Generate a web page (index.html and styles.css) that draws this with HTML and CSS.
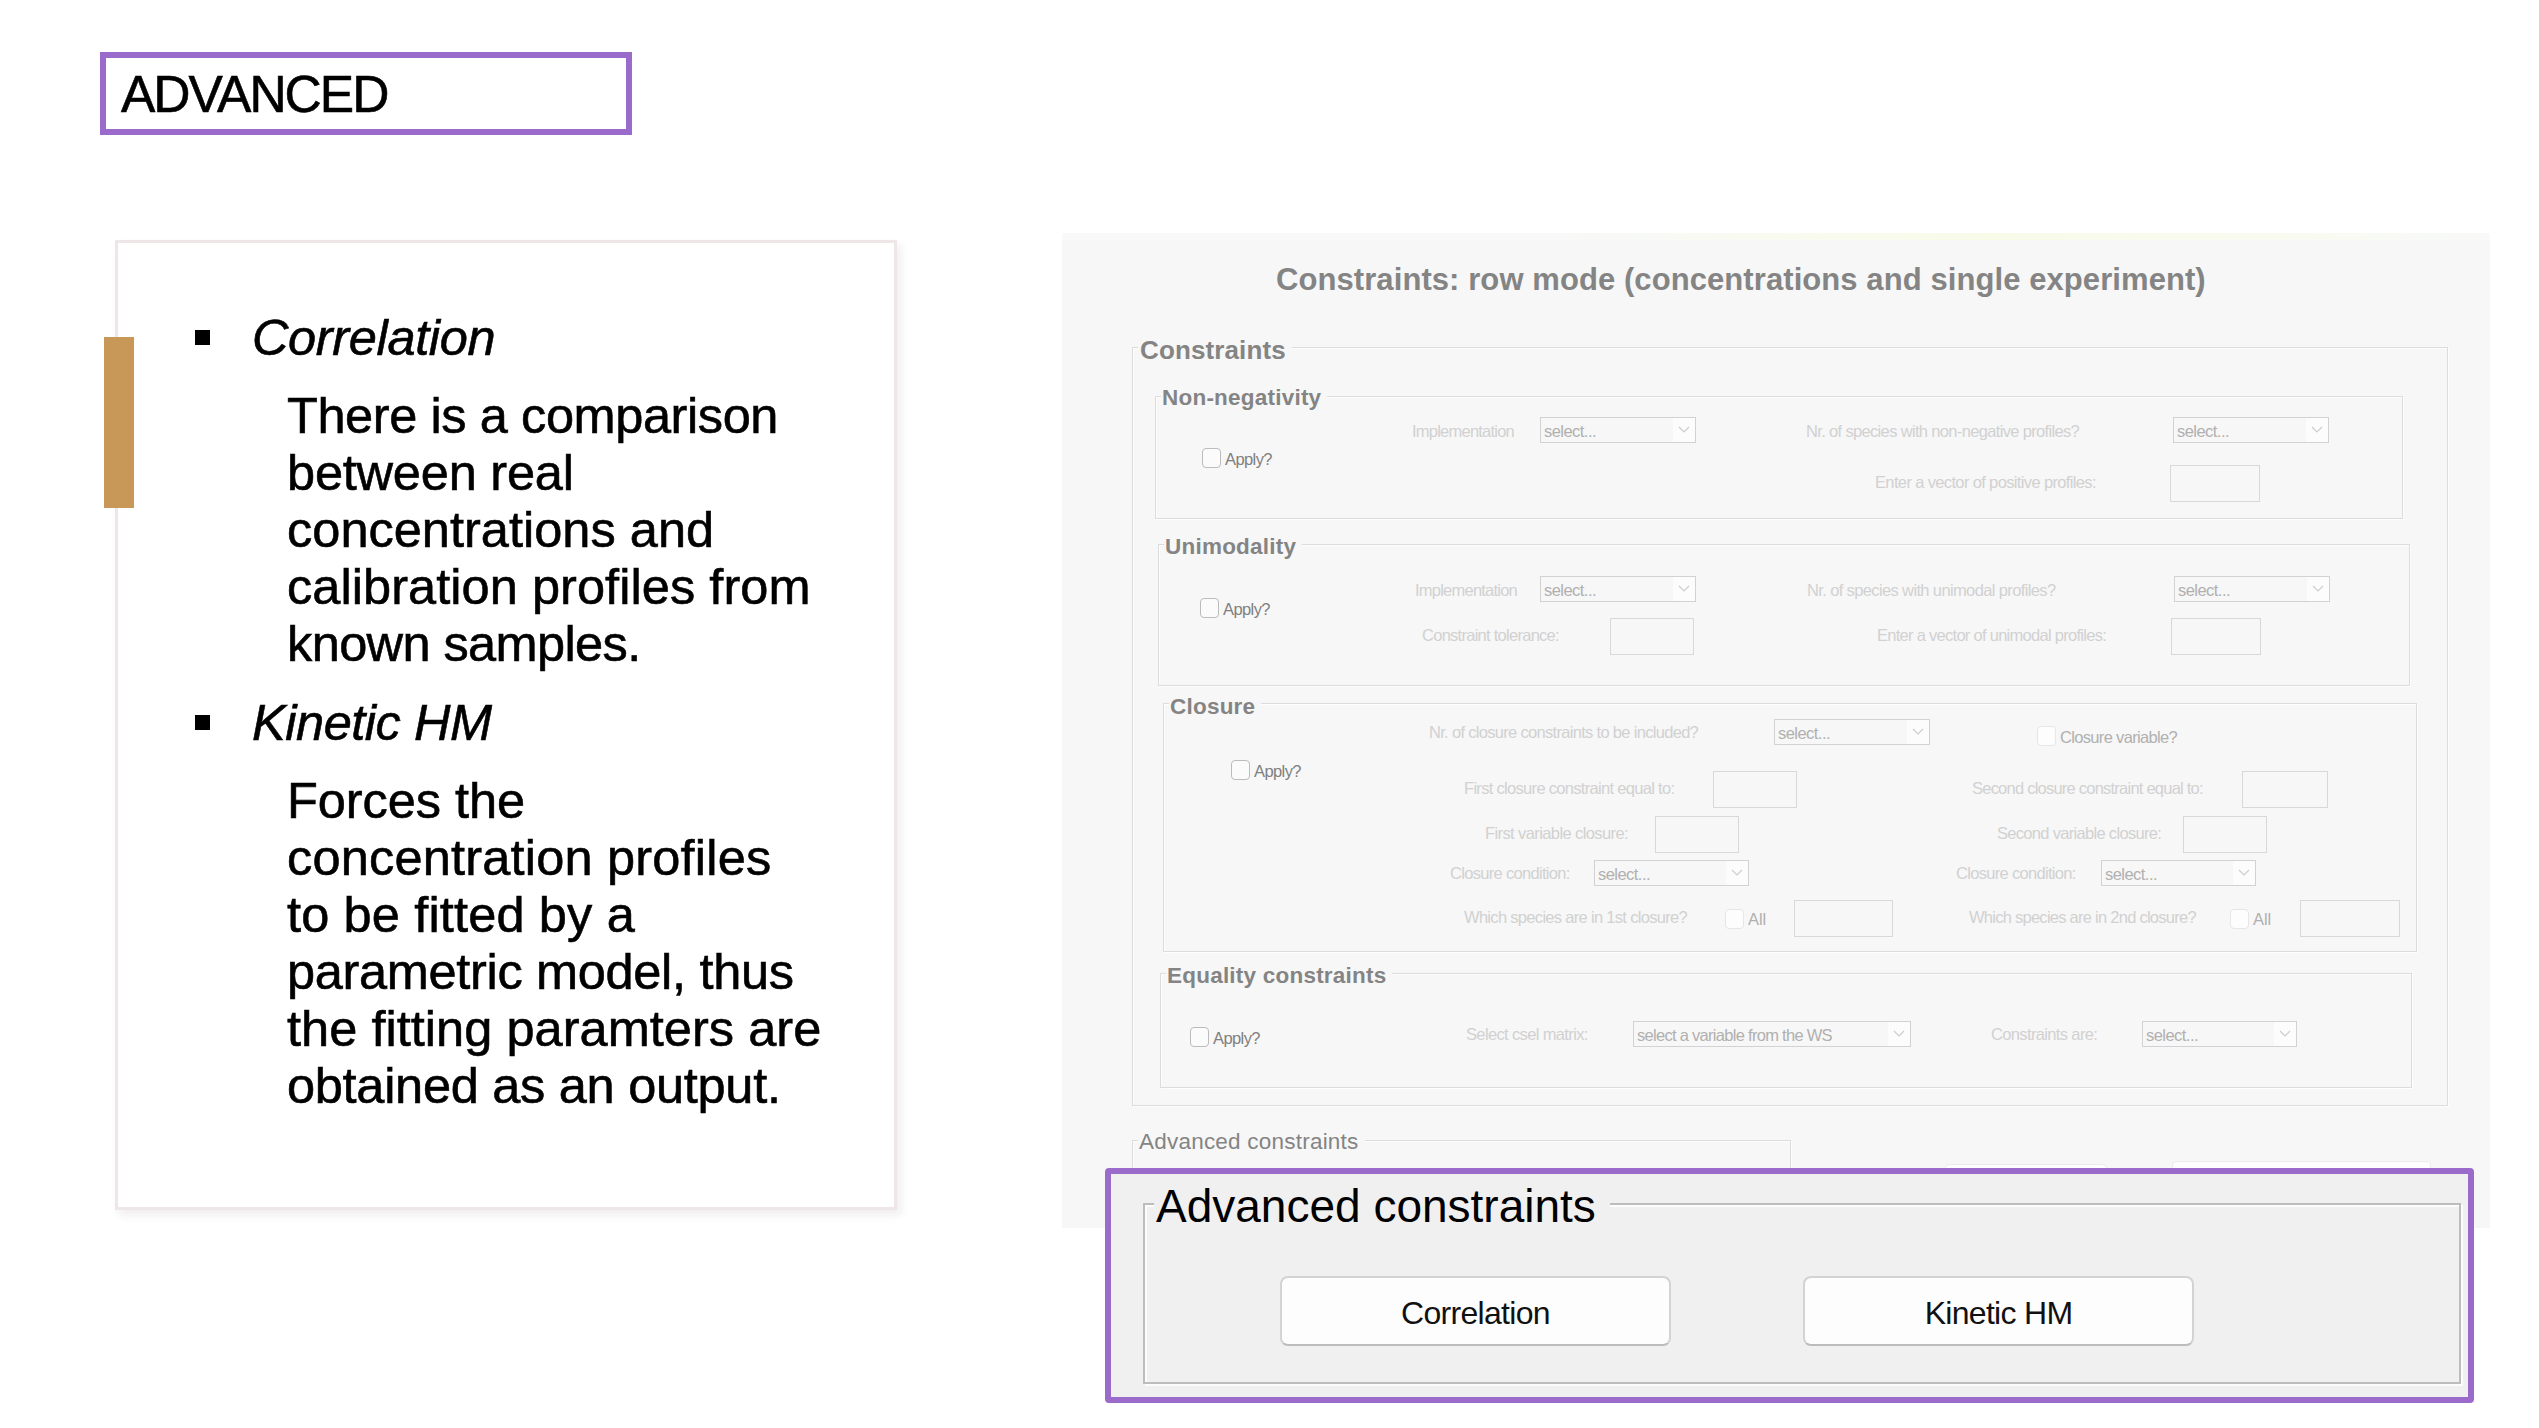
FILE: index.html
```html
<!DOCTYPE html>
<html lang="en">
<head>
<meta charset="utf-8">
<title>Advanced constraints</title>
<link rel="stylesheet" href="styles.css">
</head>
<body>
<h1 class="heading">ADVANCED</h1>
<main class="slide">
  <section class="card">
    <i class="tab"></i>
    <h2 class="bullet"><i></i><em>Correlation</em></h2>
    <p class="para correlation">
      <span>There is a comparison</span>
      <span>between real</span>
      <span>concentrations and</span>
      <span>calibration profiles from</span>
      <span>known samples.</span>
    </p>
    <h2 class="bullet"><i></i><em>Kinetic HM</em></h2>
    <p class="para kinetic">
      <span>Forces the</span>
      <span>concentration profiles</span>
      <span>to be fitted by a</span>
      <span>parametric model, thus</span>
      <span>the fitting paramters are</span>
      <span>obtained as an output.</span>
    </p>
  </section>

  <section class="panel">
    <h2 class="panel-title">Constraints: row mode (concentrations and single experiment)</h2>
    <div class="group outer">
      <h3 class="legend big">Constraints</h3>

      <div class="group nonneg">
        <h3 class="legend">Non-negativity</h3>
        <div class="body">
          <div class="check apply"><i></i><span>Apply?</span></div>
          <div>
            <div class="row low n1"><label>Implementation</label><div class="select"><span>select...</span><b><svg viewBox="0 0 12 8"><path d="M1 1l5 5 5-5"/></svg></b></div></div>
          </div>
          <div>
            <div class="row low n2"><label>Nr. of species with non-negative profiles?</label><div class="select"><span>select...</span><b><svg viewBox="0 0 12 8"><path d="M1 1l5 5 5-5"/></svg></b></div></div>
            <div class="row high n3"><label>Enter a vector of positive profiles:</label><div class="input"></div></div>
          </div>
        </div>
      </div>

      <div class="group unimod">
        <h3 class="legend">Unimodality</h3>
        <div class="body">
          <div class="check apply"><i></i><span>Apply?</span></div>
          <div>
            <div class="row low u1"><label>Implementation</label><div class="select"><span>select...</span><b><svg viewBox="0 0 12 8"><path d="M1 1l5 5 5-5"/></svg></b></div></div>
            <div class="row high u2"><label>Constraint tolerance:</label><div class="input"></div></div>
          </div>
          <div>
            <div class="row low u3"><label>Nr. of species with unimodal profiles?</label><div class="select"><span>select...</span><b><svg viewBox="0 0 12 8"><path d="M1 1l5 5 5-5"/></svg></b></div></div>
            <div class="row high u4"><label>Enter a vector of unimodal profiles:</label><div class="input"></div></div>
          </div>
        </div>
      </div>

      <div class="group closure">
        <h3 class="legend">Closure</h3>
        <div class="body">
          <div class="check apply"><i></i><span>Apply?</span></div>
          <div>
            <div class="row c1"><label>Nr. of closure constraints to be included?</label><div class="select"><span>select...</span><b><svg viewBox="0 0 12 8"><path d="M1 1l5 5 5-5"/></svg></b></div></div>
            <div class="row high c2"><label>First closure constraint equal to:</label><div class="input"></div></div>
            <div class="row high c3"><label>First variable closure:</label><div class="input"></div></div>
            <div class="row c4"><label>Closure condition:</label><div class="select"><span>select...</span><b><svg viewBox="0 0 12 8"><path d="M1 1l5 5 5-5"/></svg></b></div></div>
            <div class="row high c5"><label>Which species are in 1st closure?</label><div class="check off all"><i></i><span>All</span></div><div class="input"></div></div>
          </div>
          <div>
            <div class="check off variable"><i></i><span>Closure variable?</span></div>
            <div class="row high c6"><label>Second closure constraint equal to:</label><div class="input"></div></div>
            <div class="row high c7"><label>Second variable closure:</label><div class="input"></div></div>
            <div class="row c8"><label>Closure condition:</label><div class="select"><span>select...</span><b><svg viewBox="0 0 12 8"><path d="M1 1l5 5 5-5"/></svg></b></div></div>
            <div class="row high c9"><label>Which species are in 2nd closure?</label><div class="check off all"><i></i><span>All</span></div><div class="input"></div></div>
          </div>
        </div>
      </div>

      <div class="group equality">
        <h3 class="legend">Equality constraints</h3>
        <div class="body">
          <div class="check apply"><i></i><span>Apply?</span></div>
          <div>
            <div class="row e1"><label>Select csel matrix:</label><div class="select wide"><span>select a variable from the WS</span><b><svg viewBox="0 0 12 8"><path d="M1 1l5 5 5-5"/></svg></b></div></div>
          </div>
          <div>
            <div class="row e2"><label>Constraints are:</label><div class="select"><span>select...</span><b><svg viewBox="0 0 12 8"><path d="M1 1l5 5 5-5"/></svg></b></div></div>
          </div>
        </div>
      </div>
    </div>

    <div class="lower">
      <div class="group small-adv"><h3 class="legend plain">Advanced constraints</h3></div>
      <div class="ghost g1"></div>
      <div class="ghost g2"></div>
    </div>
  </section>
</main>

<aside class="callout">
  <div class="callout-box">
    <h2 class="callout-title">Advanced constraints</h2>
    <div class="buttons">
      <button type="button">Correlation</button>
      <button type="button">Kinetic HM</button>
    </div>
  </div>
</aside>
</body>
</html>
```
FILE: styles.css
```css
* { box-sizing: border-box; }
body {
  margin: 0;
  width: 2539px;
  height: 1428px;
  overflow: hidden;
  position: relative;
  background: #fff;
  color: #000;
  font-family: "Liberation Sans", Arial, sans-serif;
}
h1, h2, h3, p { margin: 0; font-weight: normal; white-space: nowrap; }
span, em, label { white-space: nowrap; }

.heading {
  width: 532px;
  height: 83px;
  margin: 52px 0 0 100px;
  padding-left: 15px;
  border: 6px solid #9a6bcb;
  font-size: 51.5px;
  line-height: 72px;
  letter-spacing: -2px;
  -webkit-text-stroke: .6px #000;
}
.slide { display: flex; align-items: flex-start; }

/* left text card */
.card {
  position: relative;
  width: 782px;
  height: 970px;
  margin: 105px 0 0 115px;
  padding-top: 66px;
  border: 3px solid #efe6e8;
  box-shadow: 4px 5px 8px rgba(90, 60, 70, .09);
  font-size: 50.5px;
  line-height: 57px;
  -webkit-text-stroke: .6px #000;
}
.tab {
  position: absolute;
  left: -14px;
  top: 94px;
  width: 30px;
  height: 171px;
  background: #c89858;
}
.bullet {
  display: flex;
  align-items: center;
  gap: 42px;
  padding-left: 77px;
  font-size: inherit;
  line-height: 57px;
  letter-spacing: -.35px;
}
.bullet i { width: 15px; height: 15px; background: #000; }
.para {
  display: flex;
  flex-direction: column;
  align-items: flex-start;
  margin: 21px 0 22px 169px;
}
.correlation span:nth-child(1) { letter-spacing: -.41px; }
.correlation span:nth-child(2) { letter-spacing: -.2px; }
.correlation span:nth-child(3) { letter-spacing: .02px; }
.correlation span:nth-child(4) { letter-spacing: .06px; }
.correlation span:nth-child(5) { letter-spacing: -.6px; }
.kinetic span:nth-child(1) { letter-spacing: -.05px; }
.kinetic span:nth-child(2) { letter-spacing: .2px; }
.kinetic span:nth-child(3) { letter-spacing: .15px; }
.kinetic span:nth-child(4) { letter-spacing: -.32px; }
.kinetic span:nth-child(5) { letter-spacing: .04px; }
.kinetic span:nth-child(6) { letter-spacing: -.28px; }
.correlation + .bullet { letter-spacing: -.45px; }

/* faded form */
.panel {
  width: 1428px;
  height: 995px;
  margin: 98px 0 0 165px;
  background:
    linear-gradient(90deg, #f8f9f8 0, #f8f9f8 35%, #f9fbee 55%, #f8fbe8 65%, #f9fbf1 85%, #f8f9f8 100%) 0 0 / 100% 7px no-repeat,
    #f7f7f7;
}
.panel-title {
  height: 114px;
  padding: 28px 0 0 214px;
  color: #848484;
  font-size: 31px;
  line-height: 38px;
  font-weight: bold;
  letter-spacing: .08px;
}
.group {
  display: flex;
  flex-direction: column;
  border: 1px solid #dcdcdc;
  box-shadow: inset 1px 1px #fdfdfd, 1px 1px #fdfdfd;
}
.outer { width: 1316px; height: 759px; margin-left: 70px; }
.legend {
  align-self: flex-start;
  flex: none;
  height: 30px;
  margin: -15px 0 -15px 5px;
  padding: 2px 6px 0 1px;
  background: #f7f7f7;
  color: #848484;
  font-size: 22.5px;
  line-height: 30px;
  font-weight: bold;
  letter-spacing: .22px;
}
.legend.big { font-size: 26px; padding-left: 2px; letter-spacing: .12px; }
.legend.plain { font-weight: normal; padding-top: 1px; }
.nonneg { width: 1248px; height: 123px; margin: 48px 0 0 22px; }
.nonneg .legend { padding-top: 1px; }
.unimod { width: 1252px; height: 142px; margin: 25px 0 0 25px; }
.closure { width: 1254px; height: 249px; margin: 17px 0 0 30px; }
.closure .legend { padding-top: 3px; }
.equality { width: 1252px; height: 115px; margin: 21px 0 0 27px; }

.body { display: grid; font-size: 16.5px; line-height: 18px; }
.nonneg .body { grid-template-columns: 244px 400px 1fr; }
.unimod .body { grid-template-columns: 241px 400px 1fr; }
.closure .body { grid-template-columns: 236px 540px 1fr; }
.equality .body { grid-template-columns: 239px 520px 1fr; }

.row { display: grid; align-items: center; letter-spacing: -.69px; }
.row label { padding-left: 1px; color: #d1d1d1; }
.row.low label { padding-top: 2px; }
.row.high label { padding-bottom: 4px; }

.check { display: flex; align-items: center; gap: 4px; height: 20px; color: #808080; letter-spacing: -.58px; }
.check i { width: 19px; height: 20px; border: 1.5px solid #bcbcbc; border-radius: 4px; background: #fbfbfb; }
.check span { padding-top: 1px; }
.check.off { color: #b0b0b0; }
.check.off i { border-color: #e6e6e6; background: #fdfdfd; }
.check.all { letter-spacing: -.11px; }
.check.variable { letter-spacing: -.67px; }

.select {
  display: flex;
  align-items: stretch;
  justify-content: space-between;
  height: 26px;
  padding-left: 3px;
  border: 1px solid #d2d2d4;
  color: #b0b0b0;
  line-height: 26px;
  letter-spacing: -.54px;
}
.select.wide { letter-spacing: -.71px; }
.select b { display: flex; align-items: center; width: 22px; padding: 0 5px; background: #fcfcfc; }
.select svg { width: 12px; height: 8px; fill: none; stroke: #cdcdcd; stroke-width: 1.2; }
.input { height: 37px; border: 1px solid #d8d8da; background: #f7f7f8; }

.nonneg .apply { margin: 51px 0 0 46px; }
.n1 { margin: 20px 0 0 11px; grid-template-columns: 129px 156px; }
.n2 { margin: 20px 0 0 5px; grid-template-columns: 368px 156px; }
.n3 { margin: 22px 0 0 74px; grid-template-columns: 296px 90px; }
.n1 label, .u1 label { letter-spacing: -.77px; }
.n2 label { letter-spacing: -.66px; }
.n3 label { letter-spacing: -.64px; }

.unimod .apply { margin: 53px 0 0 41px; }
.u1 { margin: 31px 0 0 14px; grid-template-columns: 126px 156px; }
.u2 { margin: 16px 0 0 21px; grid-template-columns: 189px 84px; }
.u3 { margin: 31px 0 0 6px; grid-template-columns: 368px 156px; }
.u4 { margin: 16px 0 0 76px; grid-template-columns: 295px 90px; }
.u2 label { letter-spacing: -.73px; }
.u3 label { letter-spacing: -.63px; }
.u4 label { letter-spacing: -.72px; }

.closure .apply { margin: 56px 0 0 67px; }
.c1 { margin: 15px 0 0 28px; grid-template-columns: 346px 156px; }
.c2 { margin: 26px 0 0 63px; grid-template-columns: 250px 84px; }
.c3 { margin: 8px 0 0 84px; grid-template-columns: 171px 84px; }
.c4 { margin: 7px 0 0 49px; grid-template-columns: 145px 155px; }
.c5 { margin: 14px 0 0 63px; grid-template-columns: 262px 69px 99px; }
.variable { margin: 22px 0 0 97px; }
.c6 { margin: 25px 0 0 31px; grid-template-columns: 271px 86px; }
.c7 { margin: 8px 0 0 56px; grid-template-columns: 187px 84px; }
.c8 { margin: 7px 0 0 15px; grid-template-columns: 146px 155px; }
.c9 { margin: 14px 0 0 28px; grid-template-columns: 262px 70px 100px; }
.c3 label { letter-spacing: -.6px; }
.c6 label { letter-spacing: -.77px; }
.c9 label { letter-spacing: -.74px; }

.equality .apply { margin: 53px 0 0 29px; }
.e1 { margin: 47px 0 0 65px; grid-template-columns: 168px 278px; }
.e2 { margin: 47px 0 0 70px; grid-template-columns: 152px 155px; }
.e1 label, .e2 label { letter-spacing: -.64px; }

.lower { display: flex; align-items: flex-end; height: 122px; padding-left: 70px; }
.small-adv { width: 659px; height: 88px; }
.ghost { height: 64px; border: 1px solid #ececec; border-radius: 4px; background: #fefefe; }
.g1 { width: 162px; margin-left: 154px; }
.g2 { width: 259px; height: 67px; margin-left: 65px; }

/* enlarged call-out laid over the form */
.callout {
  position: absolute;
  left: 1105px;
  top: 1168px;
  width: 1369px;
  height: 235px;
  padding: 29px 7px 13px 32px;
  border: 6px solid #9a6bcb;
  border-radius: 4px;
  background: #f0f0f0;
}
.callout-box {
  display: flex;
  flex-direction: column;
  height: 181px;
  border: 2px solid #bdbdbd;
  box-shadow: inset 2px 2px #fcfcfc, 2px 2px #fcfcfc;
}
.callout-title {
  align-self: flex-start;
  height: 50px;
  margin: -25px 0 0 9px;
  padding: 1px 14px 0 2px;
  background: #f0f0f0;
  font-size: 46px;
  line-height: 50px;
}
.buttons { display: flex; gap: 132px; margin: 46px 0 0 135px; }
.buttons button {
  width: 391px;
  height: 70px;
  padding: 4px 0 0;
  border: 2px solid #d3d3d3;
  border-bottom-color: #bcbcbc;
  border-radius: 8px;
  background: #fdfdfd;
  color: #111;
  font: 32px/36px "Liberation Sans", Arial, sans-serif;
  letter-spacing: -.7px;
}
```
